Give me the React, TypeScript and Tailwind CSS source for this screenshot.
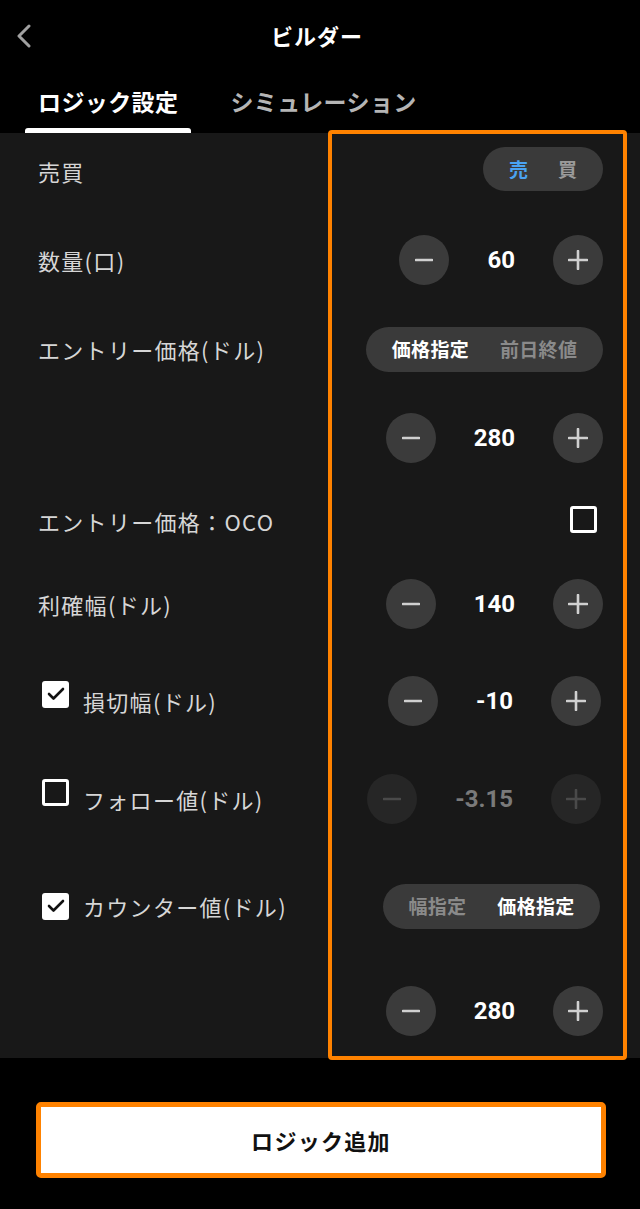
import React from "react";

const jp = { fontFamily: '"Noto Sans CJK JP", "Noto Sans", sans-serif' };
const num = { fontFamily: 'Roboto, "Noto Sans", sans-serif' };

function Minus({ dim }: { dim?: boolean }) {
  return (
    <svg width="18" height="18" viewBox="0 0 18 18">
      <path d="M1 9h16" stroke={dim ? "#4a4a4a" : "#d0d0d0"} strokeWidth="2.6" strokeLinecap="round" />
    </svg>
  );
}

function Plus({ dim }: { dim?: boolean }) {
  return (
    <svg width="20" height="20" viewBox="0 0 20 20">
      <path d="M1 10h18M10 1v18" stroke={dim ? "#4a4a4a" : "#d0d0d0"} strokeWidth="2.6" strokeLinecap="round" />
    </svg>
  );
}

function Stepper({ value, disabled }: { value: string; disabled?: boolean }) {
  const circle = disabled ? "bg-[#262626]" : "bg-[#3b3b3b]";
  return (
    <div className="flex items-center gap-[38px]">
      <div className={`w-[50px] h-[50px] rounded-full flex items-center justify-center ${circle}`}>
        <Minus dim={disabled} />
      </div>
      <span
        style={num}
        className={`text-[24px] font-bold ${disabled ? "text-[#7a7a7a]" : "text-white"}`}
      >
        {value}
      </span>
      <div className={`w-[50px] h-[50px] rounded-full flex items-center justify-center ${circle}`}>
        <Plus dim={disabled} />
      </div>
    </div>
  );
}

function Toggle({ left, right, active, wide }: { left: string; right: string; active: "l" | "r"; wide?: boolean }) {
  return (
    <div
      className={`h-[45px] rounded-full bg-[#3a3a3a] flex items-center justify-center gap-[31px] font-bold text-[19px] tracking-[0.3px] ${
        wide ? "w-[237px]" : "w-[217px]"
      }`}
    >
      <span className={active === "l" ? "text-white" : "text-[#8a8a8a]"}>{left}</span>
      <span className={active === "r" ? "text-white" : "text-[#8a8a8a]"}>{right}</span>
    </div>
  );
}

function Check({ on, className = "" }: { on?: boolean; className?: string }) {
  if (on) {
    return (
      <div className={`w-[27px] h-[27px] rounded-[3px] bg-white flex items-center justify-center ${className}`}>
        <svg width="18" height="14" viewBox="0 0 18 14">
          <path d="M2 7l4.5 4.5L16 2" fill="none" stroke="#111" strokeWidth="2.6" strokeLinecap="round" strokeLinejoin="round" />
        </svg>
      </div>
    );
  }
  return <div className={`w-[27px] h-[27px] rounded-[3px] border-[3px] border-white ${className}`} />;
}

function Row({ label, children, mt, check, boxUp, pr = "pr-[37px]" }: any) {
  return (
    <div className={`h-[50px] flex items-center justify-between pl-[38px] ${pr} ${mt}`}>
      <div className="flex items-center text-[22px] tracking-[1.3px] text-[#d6d6d6]">
        {check !== undefined && (
          <Check on={check} className={`ml-[4px] mr-[14px] ${boxUp ? "-mt-[14px]" : ""}`} />
        )}
        <span>{label}</span>
      </div>
      {children}
    </div>
  );
}

export default function App() {
  return (
    <div style={jp} className="w-[640px] h-[1209px] bg-black flex flex-col">
      <div className="h-[70px] relative flex items-center justify-center">
        <svg className="absolute left-[16px] top-[24px]" width="16" height="24" viewBox="0 0 16 24">
          <path d="M13 2L3 12l10 10" fill="none" stroke="#a0a0a0" strokeWidth="3" strokeLinecap="round" strokeLinejoin="round" />
        </svg>
        <span className="text-white font-bold text-[22px] tracking-[1px] -ml-[6px]">ビルダー</span>
      </div>
      <div className="h-[63px] flex items-end pl-[25px] gap-[39px]">
        <div className="flex flex-col items-center">
          <span className="text-white font-bold text-[23px] tracking-[0.4px] px-[13px] pb-[10px]">ロジック設定</span>
          <div className="h-[5px] w-full bg-white rounded-t-[3px]" />
        </div>
        <span className="text-[#b5b5b5] font-bold text-[23px] tracking-[0.4px] pb-[15px]">シミュレーション</span>
      </div>

      <div className="relative bg-[#181818] flex flex-col pb-[22px]">
        <div className="absolute left-[328px] top-[-3px] w-[299px] bottom-[-2px] border-4 border-[#ff8200] rounded-[4px] pointer-events-none" />

        <Row label="売買" mt="mt-[13px]">
          <div className="w-[120px] h-[44px] rounded-full bg-[#3a3a3a] flex items-center justify-center gap-[30px] font-bold text-[19px] mt-[-4px]">
            <span className="text-[#4aa3f2]">売</span>
            <span className="text-[#9a9a9a]">買</span>
          </div>
        </Row>
        <Row label="数量(口)" mt="mt-[39px]">
          <Stepper value="60" />
        </Row>
        <Row label="エントリー価格(ドル)" mt="mt-[39px]">
          <Toggle left="価格指定" right="前日終値" active="l" wide />
        </Row>
        <Row label="" mt="mt-[39px]">
          <Stepper value="280" />
        </Row>
        <Row label="エントリー価格：OCO" mt="mt-[33px]" pr="pr-[43px]">
          <Check className="-mt-[4px]" />
        </Row>
        <Row label="利確幅(ドル)" mt="mt-[33px]">
          <Stepper value="140" />
        </Row>
        <Row label="損切幅(ドル)" mt="mt-[47px]" check={true} boxUp pr="pr-[39px]">
          <Stepper value="-10" />
        </Row>
        <Row label="フォロー値(ドル)" mt="mt-[48px]" check={false} boxUp pr="pr-[39px]">
          <Stepper value="-3.15" disabled />
        </Row>
        <Row label="カウンター値(ドル)" mt="mt-[57px]" check={true} pr="pr-[40px]">
          <Toggle left="幅指定" right="価格指定" active="r" />
        </Row>
        <Row label="" mt="mt-[55px]">
          <Stepper value="280" />
        </Row>
      </div>

      <div className="flex-1 flex items-start pt-[44px] px-[36px] pr-[34px]">
        <button className="w-full h-[76px] rounded-[5px] border-[5px] border-[#ff8200] bg-white text-[22px] tracking-[1.3px] font-bold text-[#111]">
          ロジック追加
        </button>
      </div>
    </div>
  );
}
